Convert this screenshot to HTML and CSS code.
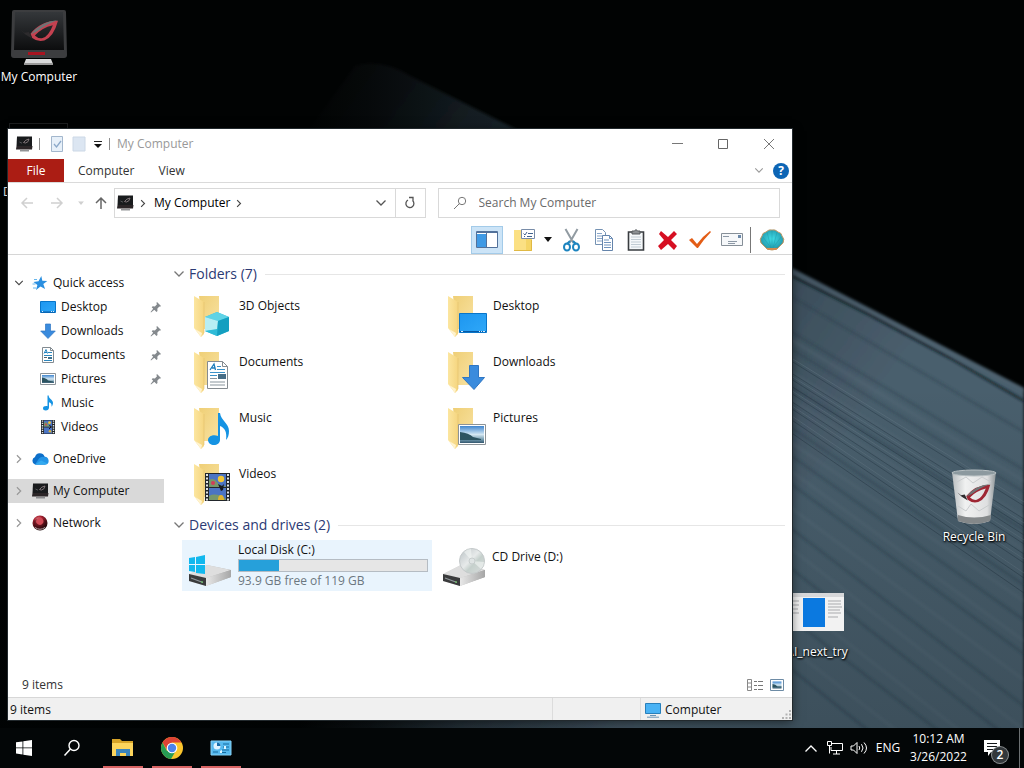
FILE: index.html
```html
<!DOCTYPE html>
<html lang="en">
<head>
<meta charset="utf-8">
<meta name="viewport" content="width=device-width, initial-scale=1">
<title>My Computer</title>
<link rel="stylesheet" href="styles.css">
</head>
<body>
<svg class="defs" aria-hidden="true">
  <defs>
    <linearGradient id="gFront" x1="0" y1="0" x2="1" y2="0"><stop offset="0" stop-color="#fce6a0"/><stop offset="1" stop-color="#f5d57f"/></linearGradient>
    <linearGradient id="gBack" x1="0" y1="0" x2="1" y2="1"><stop offset="0" stop-color="#efcf76"/><stop offset="1" stop-color="#f8e2a2"/></linearGradient>
    <linearGradient id="gBlue" x1="0" y1="0" x2="1" y2="1"><stop offset="0" stop-color="#1d96f0"/><stop offset="1" stop-color="#2fa8f8"/></linearGradient>
    <linearGradient id="gSky" x1="0" y1="0" x2="0" y2="1"><stop offset="0" stop-color="#3f86cf"/><stop offset=".5" stop-color="#d5e8f3"/><stop offset=".8" stop-color="#6f97ab"/><stop offset="1" stop-color="#32566e"/></linearGradient>
    <linearGradient id="gDrive" x1="0" y1="0" x2="1" y2="0"><stop offset="0" stop-color="#e8e8e8"/><stop offset="1" stop-color="#a6a6a6"/></linearGradient>
    <linearGradient id="gDisc" x1="0" y1="0" x2="1" y2="1"><stop offset="0" stop-color="#b9c1c4"/><stop offset=".45" stop-color="#e7eaea"/><stop offset=".6" stop-color="#c5d0cc"/><stop offset="1" stop-color="#d9dcdc"/></linearGradient>
    <radialGradient id="gBall" cx=".4" cy=".3" r=".7"><stop offset="0" stop-color="#e89a9a"/><stop offset=".4" stop-color="#a92030"/><stop offset="1" stop-color="#190608"/></radialGradient>
    <radialGradient id="gShell" cx=".5" cy=".45" r=".6"><stop offset="0" stop-color="#3fdce6"/><stop offset=".7" stop-color="#28a6b8"/><stop offset="1" stop-color="#6d7b62"/></radialGradient>
    <linearGradient id="gBin" x1="0" y1="0" x2="1" y2="0"><stop offset="0" stop-color="#b9bdbf"/><stop offset=".3" stop-color="#f0f1f1"/><stop offset=".8" stop-color="#dedfe0"/><stop offset="1" stop-color="#8e9598"/></linearGradient>
    <linearGradient id="gScreen" x1="0" y1="0" x2="0" y2="1"><stop offset="0" stop-color="#34373a"/><stop offset="1" stop-color="#0c0d0e"/></linearGradient>

    <symbol id="folder" viewBox="0 0 46 46">
      <path d="M8 1h20v33H12z" fill="url(#gBack)"/>
      <path d="M3 1l10 6v32l-3 3-7-9z" fill="url(#gFront)"/>
      <path d="M4 34l6 8 1-4z" fill="#fff3cf"/>
      <path d="M13 7v31" stroke="#e3c06c" stroke-width=".6"/>
    </symbol>
    <symbol id="pc" viewBox="0 0 18 16">
      <path d="M2 .5h15V10H1.500z" fill="#191b1d"/>
      <path d="M1.500 10h16l-.5 3.500H1z" fill="#2b2527"/>
      <path d="M8.500 6.500q2-3 5.500-3.500-.5 3.500-3.500 4z" fill="none" stroke="#97898d" stroke-width=".8"/>
      <path d="M4.500 6l2.500 1.200" stroke="#6d7072" stroke-width=".7"/>
      <path d="M5 14.800h9" stroke="#77797c" stroke-width="1.200"/>
    </symbol>
    <symbol id="star" viewBox="0 0 16 16"><path d="M9.300 1l1 4.800 5 .2-4 3 1.800 5-4.600-2.600L4 15l1.400-5L1.500 7l5-.8z" fill="#2a8fe0"/><path d="M2 4.500h3M.5 9h3M1 13h3" stroke="#55aeea" stroke-width=".9"/></symbol>
    <symbol id="desktop" viewBox="0 0 16 16"><path d="M.5 2.500h15v11H.5z" fill="url(#gBlue)" stroke="#0875c9"/><path d="M1 13h14" stroke="#0758a3"/><path d="M2 12.500h1m8 0h1m1 0h1" stroke="#d7efff"/></symbol>
    <symbol id="down" viewBox="0 0 16 16"><path d="M5.500 1h5v7h4.800L8 15.500.700 8h4.800z" fill="#3a8bdd" stroke="#2f76c3" stroke-width=".7"/></symbol>
    <symbol id="doc" viewBox="0 0 16 16"><path d="M2.500.5h8l3 3v12h-11z" fill="#fff" stroke="#828b91"/><path d="M10.500.5v3h3" fill="none" stroke="#828b91"/><path d="M4 6.500L6 2.500l1.500 4M5 5.500h2" fill="none" stroke="#2384c1"/><path d="M8 5.500h4M4 8.500h8M4 13.500h8" stroke="#2b86bd"/><path d="M4 10.500h3" stroke="#58636b"/><path d="M8 10h4v2H8z" fill="#3d718e"/></symbol>
    <symbol id="pic" viewBox="0 0 16 16"><path d="M.5 2.500h15v11H.5z" fill="#fff" stroke="#8d9499"/><path d="M2 4h12v8H2z" fill="url(#gSky)"/><path d="M2 6.500q5 1 6 3l5 1v.8H2z" fill="#2c5360"/></symbol>
    <symbol id="note" viewBox="0 0 16 16"><path d="M7.500.5h1.200c0 3.500 4.300 4.200 4.300 7.500 0 1.500-.8 3-1.500 3.800.5-3-1-4-2.500-4.500V12.500c0 2-1.500 3-3.200 3S3 14.500 3 13.200s1.600-2.400 4.500-2z" fill="#1593e3"/></symbol>
    <symbol id="film" viewBox="0 0 16 16"><path d="M1 1h14v14H1z" fill="#22262b"/><path d="M4 1.500h8v6H4zM4 8.500h8v6H4z" fill="#4b74c3"/><path d="M2.500 1.500v14M13.500 1.500v14" stroke="#e1e4e6" stroke-width="1.400" stroke-dasharray="1.300 1"/><path d="M4 4q2-2 4 1T12 7.500H4z" fill="#78976a"/><circle cx="9.500" cy="3.700" r="1.400" fill="#f1c634"/><path d="M8.500 13q0-2 1.500-2t1.500 2.500z" fill="#e0b42f"/><circle cx="6" cy="5.500" r=".9" fill="#d33d58"/><path d="M9.500 6l1.500 2-2 2" stroke="#15171d" fill="none"/></symbol>
    <symbol id="cloud" viewBox="0 0 18 16"><path d="M4 13.500a4 4 0 010-7.500 5 5 0 019.500-.5A4.200 4.200 0 0114 13.500z" fill="#0d6fc9"/><path d="M8 7.500a5 5 0 015-1.500 3.800 3.800 0 011.500 7.500H4z" fill="#2394e6"/><path d="M4 13.500l6-4 6.500 3q-1 1-2.500 1z" fill="#33aaf0"/></symbol>
    <symbol id="ball" viewBox="0 0 16 16"><circle cx="8" cy="8" r="7.500" fill="url(#gBall)"/><path d="M1.500 6q6-5 13 0L14 11q-6 5-12 0z" fill="#120608" opacity=".35"/><path d="M4 6q1-3 4-3.500 3 .5 3.500 3.500 0 3-3.500 4Q4 9 4 6z" fill="#d14a56"/><path d="M3 12.500q5 3.500 10 0" stroke="#b7a9aa" fill="none"/></symbol>
    <symbol id="pin" viewBox="0 0 12 12"><path d="M7 1l4 4-1 .8-.7-.2-2 2.200.2 2.200-1 1L1.700 6.200l1-1 2.200.2L7 3.200 6.400 2zM3.500 7.300l1.200 1.200L1 11.500 .600 11z" fill="#84898d"/></symbol>
    <symbol id="chevR" viewBox="0 0 8 12"><path d="M1.500 1.500L6 6l-4.500 4.500" fill="none" stroke="currentColor" stroke-width="1.500"/></symbol>
    <symbol id="chevD" viewBox="0 0 12 8"><path d="M1.500 1.500L6 6l4.500-4.500" fill="none" stroke="currentColor" stroke-width="1.300"/></symbol>
    <symbol id="arrow" viewBox="0 0 14 14"><path d="M13 7H2M7 2L2 7l5 5" fill="none" stroke="currentColor" stroke-width="1.500"/></symbol>
    <symbol id="tri" viewBox="0 0 8 5"><path d="M0 0h8L4 5z" fill="currentColor"/></symbol>
    <symbol id="drive" viewBox="0 0 46 26"><path d="M2 12L20 3l24 5v7L19 24 2 19z" fill="url(#gDrive)"/><path d="M2 12L20 3l24 5-25 8z" fill="#dedede"/><path d="M2 12l17 4v8L2 19z" fill="#3a3b3c"/><path d="M19 16l25-8v7L19 24z" fill="url(#gDrive)"/><path d="M4 16l12 4.500" stroke="#90979b" stroke-width="1.200"/><path d="M14 20h2" stroke="#6ad25f"/></symbol>
    <symbol id="eye" viewBox="0 0 46 28"><path d="M12 16Q24 1 44 1q-5 19-16 23-8 2-14-3l-2-5M17 18q8-9 21-12-5 13-12 15-5 1-9-3" fill="currentColor" fill-rule="evenodd"/><path d="M12 17Q23 2 44 0 30 5 20 13z" fill="#6f7375"/><path d="M0 11l5 4 5-1 4 8-8-5z" fill="#2d2b2d"/></symbol>
  </defs>
</svg>

<div class="screen">
  <svg class="wallpaper" viewBox="0 0 1024 768" preserveAspectRatio="xMidYMid slice" aria-hidden="true">
    <defs>
      <linearGradient id="slab" gradientUnits="userSpaceOnUse" x1="360" y1="60" x2="860" y2="420"><stop offset="0" stop-color="#12191d"/><stop offset=".2" stop-color="#1b262d"/><stop offset=".75" stop-color="#384a56"/><stop offset="1" stop-color="#4a5e6d"/></linearGradient>
      <linearGradient id="side" gradientUnits="userSpaceOnUse" x1="300" y1="0" x2="620" y2="0"><stop offset="0" stop-color="#010303"/><stop offset=".22" stop-color="#010303" stop-opacity=".75"/><stop offset=".5" stop-color="#010303" stop-opacity=".3"/><stop offset="1" stop-color="#010303" stop-opacity="0"/></linearGradient>
      <linearGradient id="low" x1="0" y1="0" x2="0" y2="1"><stop offset=".5" stop-color="#05090c" stop-opacity="0"/><stop offset="1" stop-color="#05090c" stop-opacity=".2"/></linearGradient>
      <filter id="soft"><feGaussianBlur stdDeviation="1.500"/></filter>
    </defs>
    <path d="M0 0h1024v768H0z" fill="#010303"/>
    <path d="M355 66Q380 58 410 76L792 268 1024 388V768H0V560z" fill="url(#slab)" filter="url(#soft)"/>
    <path d="M0 0h620v768H0z" fill="url(#side)"/>
    <g filter="url(#soft)" fill="none">
      <path d="M792 276L870 315 950 358 1024 401" stroke="#0a151d" stroke-width="2"/>
      <path d="M792 271L1024 391" stroke="#5a6a75" stroke-width="3" opacity=".4"/>
      <path d="M780 290l244 142M780 325l244 145M780 342l244 150M780 380l244 150M780 420l244 165M780 448l244 172M780 476l244 178M780 520l244 186M780 560l244 190M780 610l210 160M780 660l150 120" stroke="#263946" stroke-width="2" opacity=".5"/>
      <path d="M780 333l244 148M780 365l244 152M780 392l244 158M780 435l244 166M780 463l244 178M780 500l244 180M780 540l244 190M780 590l230 180M780 640l180 140" stroke="#607584" stroke-width="2" opacity=".35"/>
    </g>
    <path d="M780 354l244 152M780 366l244 153M780 372l244 155M780 379l244 156M780 386l244 158M780 394l244 160M780 401l244 162M780 412l244 166M780 425l244 168" fill="none" stroke="#1d2f3d" opacity=".4"/>
    <path d="M780 351l244 151M780 369l244 154M780 383l244 157M780 398l244 161M780 408l244 165" fill="none" stroke="#7b8e9a" opacity=".25"/>
    <path d="M0 0h1024v768H0z" fill="url(#low)"/>
  </svg>

  <main class="desktop">
    <a class="shortcut shortcut-pc" href="#pc">
      <svg width="58" height="58" viewBox="0 0 58 58" aria-hidden="true">
        <path d="M4 1h50q2 0 2 2l1 43q0 3-3 3H4q-3 0-3-3L2 3q0-2 2-2z" fill="#3c3d3f"/>
        <path d="M5 3h48l1 38H4z" fill="url(#gScreen)"/>
        <path d="M18 43h17v3H18z" fill="#a81420"/>
        <path d="M16 50h25l2 5H14z" fill="#d9dadb"/><path d="M14 54h29v2H14z" fill="#999"/>
        <svg x="9" y="11" width="42" height="24" viewBox="0 0 46 28" color="#c44150"><use href="#eye"/></svg>
      </svg>
      <span>My Computer</span>
    </a>
    <a class="shortcut shortcut-hidden" href="#d"><span class="thumb"></span><span>D</span></a>
    <a class="shortcut shortcut-bin" href="#bin">
      <svg width="48" height="58" viewBox="0 0 48 58" aria-hidden="true">
        <path d="M2 4h44l-6 49q-16 6-32 0z" fill="url(#gBin)"/>
        <path d="M8 47q16 5 33 0l-1 6q-16 6-32 0z" fill="#84888a"/>
        <path d="M7 14l9-5 7 6 9-6 9 5M8 38l8 5 5-7 8 7 10-6" fill="none" stroke="#c9ccce"/>
        <ellipse cx="24" cy="5" rx="22" ry="3" fill="#8c999f" stroke="#b8c0c3"/>
        <svg x="7" y="16" width="35" height="21" viewBox="0 0 46 28" color="#9e2633"><use href="#eye"/></svg>
      </svg>
      <span>Recycle Bin</span>
    </a>
    <a class="shortcut shortcut-shot" href="#shot">
      <svg width="54" height="38" viewBox="0 0 54 38" aria-hidden="true"><path d="M0 0h54v38H0z" fill="#f2f2f2"/><path d="M0 0h54v4H0z" fill="#d7d8da"/><path d="M13 5h22v29H13z" fill="#0b79e0"/><path d="M3 8h6M3 12h6M3 16h5M3 20h6M38 8h13M38 11h13M38 14h14M38 17h12M38 20h13M38 24h10" stroke="#a9aaad"/></svg>
      <span>AI_next_try</span>
    </a>

    <section class="window" aria-label="My Computer">
      <header class="titlebar">
        <svg width="18" height="16" aria-hidden="true"><use href="#pc"/></svg>
        <span class="sep"></span>
        <button class="quick" aria-label="Properties"><svg width="14" height="16" viewBox="0 0 14 16"><path d="M1.500.5h11v15h-11z" fill="#e7f0f9" stroke="#a3b7cd"/><path d="M4 8l2.500 3L11 5" fill="none" stroke="#8ba8c9" stroke-width="1.300"/></svg></button>
        <button class="quick" aria-label="New folder"><svg width="14" height="16" viewBox="0 0 14 16"><path d="M1 1h12v14H1z" fill="#dce6f2" stroke="#ccd8e6"/></svg></button>
        <button class="quick quick-menu" aria-label="Customize toolbar"><svg width="8" height="8" viewBox="0 0 8 8"><path d="M0 1.500h8" stroke="#222"/><path d="M0 4h8L4 8z" fill="#111"/></svg></button>
        <span class="sep sep-end"></span>
        <h1 class="title">My Computer</h1>
        <button class="wbtn" aria-label="Minimize"><svg width="12" height="12"><path d="M1 5.500h11" stroke="#777"/></svg></button>
        <button class="wbtn" aria-label="Maximize"><svg width="12" height="12"><path d="M1.500 1.500h9v9h-9z" fill="none" stroke="#666"/></svg></button>
        <button class="wbtn" aria-label="Close"><svg width="12" height="12"><path d="M1 1l10 10M11 1L1 11" stroke="#777"/></svg></button>
      </header>

      <nav class="tabs" aria-label="Ribbon">
        <button class="tab tab-file">File</button>
        <button class="tab">Computer</button>
        <button class="tab tab-view">View</button>
        <button class="expand" aria-label="Expand ribbon"><svg width="10" height="7" viewBox="0 0 12 8"><use href="#chevD"/></svg></button>
        <button class="help" aria-label="Help">?</button>
      </nav>

      <div class="address-row">
        <div class="arrows">
          <button class="off" aria-label="Back"><svg width="14" height="14"><use href="#arrow"/></svg></button>
          <button class="off" aria-label="Forward"><svg class="flip" width="14" height="14"><use href="#arrow"/></svg></button>
          <button class="off recent" aria-label="Recent locations"><svg width="6" height="4" viewBox="0 0 8 5"><use href="#tri"/></svg></button>
          <button class="up" aria-label="Up"><svg class="turn" width="14" height="14"><use href="#arrow"/></svg></button>
        </div>
        <div class="address">
          <svg width="18" height="16" aria-hidden="true"><use href="#pc"/></svg>
          <svg class="crumb" width="6" height="9" viewBox="0 0 8 12"><use href="#chevR"/></svg>
          <a href="#pc">My Computer</a>
          <svg class="crumb" width="6" height="9" viewBox="0 0 8 12"><use href="#chevR"/></svg>
          <button class="drop" aria-label="Previous locations"><svg width="12" height="8"><use href="#chevD"/></svg></button>
          <button class="refresh" aria-label="Refresh"><svg width="12" height="14" viewBox="0 0 12 14"><path d="M4 4a4 4 0 104.500.5M5 1.500h4v4" fill="none" stroke="#555" stroke-width="1.300"/></svg></button>
        </div>
        <label class="search">
          <svg width="14" height="14" viewBox="0 0 14 14" aria-hidden="true"><circle cx="9" cy="5" r="3.700" fill="none" stroke="#777"/><path d="M6.500 7.500L1 13" stroke="#777"/></svg>
          <input type="search" placeholder="Search My Computer" aria-label="Search My Computer">
        </label>
      </div>

      <div class="toolbar" role="toolbar" aria-label="Commands">
        <button class="tool tool-on" aria-label="Navigation pane"><svg width="24" height="20" viewBox="0 0 24 20"><path d="M1.500 1.500h21v16h-21z" fill="#fff" stroke="#52719a"/><path d="M2 4h9v13H2z" fill="#3f9ae5"/><path d="M2 2.500h20M11.500 2v15" stroke="#52719a"/></svg></button>
        <button class="tool tool-props" aria-label="Folder options"><svg width="24" height="24" viewBox="0 0 24 24"><path d="M2 2h12v21H2z" fill="#fbe083"/><path d="M14 10h6v13h-6z" fill="#f5d566"/><path d="M2 22.500h17.500V12" fill="none" stroke="#e0b944"/><path d="M9.500 1.500h13v9h-13z" fill="#fff" stroke="#788ca8"/><path d="M11.500 5.500l1.500 1.500 2-3M16 5.500h5M12 8.500h1m2 0h5" fill="none" stroke="#42638e"/></svg><svg class="more" width="8" height="5"><use href="#tri"/></svg></button>
        <button class="tool" aria-label="Cut"><svg width="22" height="24" viewBox="0 0 22 24"><path d="M4.500 1l8 14M16.500 1l-8 14" stroke="#919ba2" stroke-width="2"/><path d="M9 13l-3 3M12 13l3 3" stroke="#1d84bf" stroke-width="2"/><ellipse cx="6" cy="19" rx="3" ry="3.500" fill="none" stroke="#1d84bf" stroke-width="2"/><ellipse cx="15" cy="19" rx="3" ry="3.500" fill="none" stroke="#1d84bf" stroke-width="2"/></svg></button>
        <button class="tool" aria-label="Copy"><svg width="22" height="24" viewBox="0 0 22 24"><path d="M2.500 1.500h7l3 3v12h-10z" fill="#fff" stroke="#7592b3"/><path d="M4 5.500h5M4 8h7M4 10.500h5M4 13h5" stroke="#89a6c9"/><path d="M9.500 7.500h7l3 3v12h-10z" fill="#fff" stroke="#6484ab"/><path d="M16.500 7.500v3h3M11 12h5M11 14.500h7M11 17h7M11 19.500h7" fill="none" stroke="#6f93bd"/></svg></button>
        <button class="tool" aria-label="Paste"><svg width="20" height="24" viewBox="0 0 20 24"><path d="M2.500 4h15v18h-15z" fill="#f5f8fa" stroke="#393c40" stroke-width="1.600"/><path d="M6 6V3h2.500q1.500-3 3 0H14v3z" fill="#8c9093" stroke="#55595d"/><path d="M5 9h10M5 11.500h10M5 14h10M5 16.500h10M5 19h10" stroke="#c1ccd4"/></svg></button>
        <button class="tool" aria-label="Delete"><svg width="22" height="22" viewBox="0 0 22 22"><path d="M4 2l7 6 6-6 3 3-6 6 6 6-3 4-6-6-7 6-3-4 6-6-5-6z" fill="#d60f22"/></svg></button>
        <button class="tool" aria-label="Apply"><svg width="24" height="20" viewBox="0 0 24 20"><path d="M1 10l3-2 5 6Q15 6 22 1l1 1q-7 7-13 16H9z" fill="#e35d16"/></svg></button>
        <button class="tool" aria-label="E-mail"><svg width="24" height="16" viewBox="0 0 24 16"><path d="M1.500 1.500h21v12h-21z" fill="#f6f8fa" stroke="#868f98"/><path d="M3 4.500h6M8 9.500h9M8 11.500h7" stroke="#8c98a5"/><path d="M18 3h3v3h-3z" fill="#6b88a8"/></svg></button>
        <span class="tool-sep"></span>
        <button class="tool tool-shell" aria-label="Classic Shell"><svg width="26" height="24" viewBox="0 0 26 24"><path d="M8 21L2 15q-2-4 1-7 0-3 4-4 3-3 6-2 3-1 6 2 4 1 4 4 3 3 1 7l-6 6q-5 2-10 0z" fill="url(#gShell)" stroke="#bf9968"/><path d="M12 20L4 9M12 20L8 4M13 20V2M14 20l4-16M14 20l8-11" stroke="#1a96a3" opacity=".4"/><path d="M7 20h12l-2 2H9z" fill="#d18b51"/></svg></button>
      </div>

      <div class="body">
        <nav class="side" aria-label="Navigation pane">
          <a class="node" href="#quick"><svg class="tw open" width="10" height="8" viewBox="0 0 12 8"><use href="#chevD"/></svg><svg width="16" height="16" viewBox="0 0 16 16"><use href="#star"/></svg><span>Quick access</span></a>
          <a class="leaf" href="#desktop"><svg width="16" height="16"><use href="#desktop"/></svg><span>Desktop</span><svg class="pin" width="12" height="12"><use href="#pin"/></svg></a>
          <a class="leaf" href="#downloads"><svg width="16" height="16"><use href="#down"/></svg><span>Downloads</span><svg class="pin" width="12" height="12"><use href="#pin"/></svg></a>
          <a class="leaf" href="#documents"><svg width="16" height="16"><use href="#doc"/></svg><span>Documents</span><svg class="pin" width="12" height="12"><use href="#pin"/></svg></a>
          <a class="leaf" href="#pictures"><svg width="16" height="16"><use href="#pic"/></svg><span>Pictures</span><svg class="pin" width="12" height="12"><use href="#pin"/></svg></a>
          <a class="leaf" href="#music"><svg width="16" height="16"><use href="#note"/></svg><span>Music</span></a>
          <a class="leaf" href="#videos"><svg width="16" height="16"><use href="#film"/></svg><span>Videos</span></a>
          <a class="node spaced" href="#onedrive"><svg class="tw" width="10" height="10" viewBox="0 0 8 12"><use href="#chevR"/></svg><svg width="18" height="16"><use href="#cloud"/></svg><span>OneDrive</span></a>
          <a class="node spaced current" href="#pc" aria-current="page"><svg class="tw" width="10" height="10" viewBox="0 0 8 12"><use href="#chevR"/></svg><svg width="18" height="16"><use href="#pc"/></svg><span>My Computer</span></a>
          <a class="node spaced" href="#network"><svg class="tw" width="10" height="10" viewBox="0 0 8 12"><use href="#chevR"/></svg><svg width="16" height="16" viewBox="0 0 16 16"><use href="#ball"/></svg><span>Network</span></a>
        </nav>

        <div class="content">
          <section>
            <h2 class="group"><svg width="12" height="8"><use href="#chevD"/></svg><span>Folders (7)</span></h2>
            <div class="tiles">
              <a class="tile" href="#3d"><svg width="46" height="46" viewBox="0 0 46 46"><use href="#folder" width="46" height="46"/><path d="M14 22l12-5 12 5v14l-12 5-12-5z" fill="#35bfd9"/><path d="M14 22l12-5 12 5-11 4z" fill="#5fd3e6"/><path d="M14 22l13 4-1 9-12 1z" fill="#b7eef4"/><path d="M14 36l12-2v7z" fill="#2fbbd7"/><path d="M27 26l11-4v14l-12 5z" fill="#149fc0"/></svg><span>3D Objects</span></a>
              <a class="tile" href="#desktop"><svg width="46" height="46" viewBox="0 0 46 46"><use href="#folder" width="46" height="46"/><path d="M14.500 18.500h27v19h-27z" fill="url(#gBlue)" stroke="#0875c9"/><path d="M15 36.500h26" stroke="#0758a3"/><path d="M16 36.500h2m16 0h1m1 0h1m1 0h2" stroke="#d7efff"/></svg><span>Desktop</span></a>
              <a class="tile" href="#documents"><svg width="46" height="46" viewBox="0 0 46 46"><use href="#folder" width="46" height="46"/><path d="M16.500 10.500h15l5 5v22h-20z" fill="#fff" stroke="#858b90"/><path d="M31.500 10.500v5h5" fill="none" stroke="#858b90"/><path d="M19 19l4-6 1.500 6M21 17h3" fill="none" stroke="#1d7dbc" stroke-width="1.300"/><path d="M26 15.500h4M26 18.500h8M19 21.500h15M19 24.500h7" stroke="#3b92c9"/><path d="M19 27.500h7M19 31h15M19 34h15" stroke="#89959d"/><path d="M27 23h8v5h-8z" fill="#466d86"/></svg><span>Documents</span></a>
              <a class="tile" href="#downloads"><svg width="46" height="46" viewBox="0 0 46 46"><use href="#folder" width="46" height="46"/><path d="M24.500 14.500h9v12h6L29 38.500 17.500 26.500h7z" fill="#3a8bdd" stroke="#2f76c3"/></svg><span>Downloads</span></a>
              <a class="tile" href="#music"><svg width="46" height="46" viewBox="0 0 46 46"><use href="#folder" width="46" height="46"/><path d="M27 6h2c1 8 9 10 9 18 0 4-1 7-3 9 1-8-1-12-6-14v14c0 3-3 5-6 5s-6-2-6-5 4-6 10-4z" fill="#1593e3"/></svg><span>Music</span></a>
              <a class="tile" href="#pictures"><svg width="46" height="46" viewBox="0 0 46 46"><use href="#folder" width="46" height="46"/><path d="M13.500 17.500h27v20h-27z" fill="#fff" stroke="#8c9397"/><path d="M15 19h24v17H15z" fill="url(#gSky)"/><path d="M15 25q9 1 13 5l8 2v1H15z" fill="#2c5360"/></svg><span>Pictures</span></a>
              <a class="tile" href="#videos"><svg width="46" height="46" viewBox="0 0 46 46"><use href="#folder" width="46" height="46"/><path d="M14 10h25v28H14z" fill="#22262b"/><path d="M18 11h17v13H18zM18 25h17v12H18z" fill="#4b74c3"/><path d="M16 11v27M37 11v27" stroke="#e1e4e6" stroke-width="2" stroke-dasharray="2 1.500"/><path d="M18 17q5-3 8 2t9 4v1H18zM18 33q7-4 17 3v1H18z" fill="#78976a"/><circle cx="30" cy="16" r="3.200" fill="#f1c634"/><circle cx="22" cy="20" r="2" fill="#d33d58"/><path d="M27 37q0-5 3-5t3 5z" fill="#e0b42f"/><path d="M27 21l4 2 2-2-1 6-2 1z" fill="#17191f"/></svg><span>Videos</span></a>
            </div>
          </section>
          <section>
            <h2 class="group"><svg width="12" height="8"><use href="#chevD"/></svg><span>Devices and drives (2)</span></h2>
            <div class="tiles drives">
              <a class="tile drive selected" href="#c"><svg width="46" height="46" viewBox="0 0 46 46"><use href="#drive" y="19" width="46" height="26"/><path d="M2 15l6-1v7H2zM9 14l9-2v9H9zM2 22h6v7l-6-1zM9 22h9v9l-9-1z" fill="#12b8ee"/></svg>
                <span class="usage"><label for="disk">Local Disk (C:)</label><progress id="disk" max="119" value="25.100"></progress><small>93.9 GB free of 119 GB</small></span></a>
              <a class="tile drive" href="#d-drive"><svg width="46" height="46" viewBox="0 0 46 46"><use href="#drive" y="19" width="46" height="26"/><circle cx="31" cy="18" r="12.500" fill="url(#gDisc)" stroke="#c4c9ca"/><path d="M31 18l-8-9q3-3 7-3zM31 18l9 8q3-3 3-7z" fill="#f4f7f5" opacity=".6"/><circle cx="31" cy="18" r="3" fill="#dfe4e4" stroke="#c7cdcd"/></svg><span>CD Drive (D:)</span></a>
            </div>
          </section>
        </div>
      </div>

      <div class="details">
        <span>9 items</span>
        <button aria-label="Details view"><svg width="16" height="12" viewBox="0 0 16 12"><path d="M.5.5h4v11h-4zM.5 4h4M.5 8h4" fill="#fff" stroke="#888"/><path d="M7 2.500h3m1 0h5M7 6.500h3m1 0h5M7 10.500h3m1 0h5" stroke="#777"/></svg></button>
        <button aria-label="Large icons view"><svg width="14" height="12" viewBox="0 0 14 12"><path d="M.5.5h13v11H.5z" fill="#fff" stroke="#6d8ba5"/><path d="M2.500 2.500h9v7h-9z" fill="url(#gSky)"/><path d="M2.500 5q3 0 5 2.500h4v1h-9z" fill="#2c5360"/></svg></button>
      </div>

      <footer class="status">
        <span class="cell cell-items">9 items</span>
        <span class="cell cell-empty"></span>
        <span class="cell cell-zone"><svg width="18" height="16" viewBox="0 0 18 16" aria-hidden="true"><path d="M1.500 1.500h15v10h-15z" fill="#49b2f4" stroke="#287fba"/><path d="M6 13.500h6M3 15.200h12" stroke="#6a94b5"/></svg>Computer</span>
        <svg class="grip" width="9" height="9" viewBox="0 0 9 9" aria-hidden="true"><path d="M7 0h2v2H7zM7 3.500h2v2H7zM7 7h2v2H7zM3.500 3.500h2v2h-2zM3.500 7h2v2h-2zM0 7h2v2H0z" fill="#b3b3b3"/></svg>
      </footer>
    </section>
  </main>

  <footer class="taskbar">
    <button class="task" aria-label="Start"><svg width="16" height="16" viewBox="0 0 16 16"><path d="M0 2.300l6.500-.9v6.100H0zM7.300 1.300L16 0v7.500H7.300zM0 8.300h6.500v6.200L0 13.600zM7.300 8.300H16V16l-8.700-1.300z" fill="#fff"/></svg></button>
    <button class="task task-search" aria-label="Search"><svg width="18" height="18" viewBox="0 0 18 18"><circle cx="11" cy="6.500" r="5" fill="none" stroke="#fff" stroke-width="1.400"/><path d="M7.500 10L1.500 16.500" stroke="#fff" stroke-width="1.500"/></svg></button>
    <button class="task running" aria-label="File Explorer"><svg width="22" height="20" viewBox="0 0 22 20"><path d="M0 1h8l2 2h11v7H0z" fill="#d6a328"/><path d="M0 5h21v13H0z" fill="#fcd45c"/><path d="M4 18v-7h14v7h-4v-3H8v3z" fill="#3b84bc"/></svg></button>
    <button class="task running" aria-label="Chrome"><svg width="22" height="22" viewBox="0 0 22 22"><circle cx="11" cy="11" r="11" fill="#fbc52d"/><path d="M1.500 5.500A11 11 0 0120.500 5.500H11L6.500 13.500z" fill="#dd4335"/><path d="M1.500 5.500A11 11 0 0010 22l5-8.500-9 .5z" fill="#279c54"/><circle cx="11" cy="11" r="5.300" fill="#fff"/><circle cx="11" cy="11" r="4.200" fill="#4c83ec"/></svg></button>
    <button class="task running" aria-label="Control Panel"><svg width="22" height="18" viewBox="0 0 22 18"><path d="M1 2h20v14H1z" fill="#56b9ee" stroke="#86d2f7"/><circle cx="7" cy="7" r="3.500" fill="#dff4ff"/><path d="M7 7V3.500A3.500 3.500 0 0110.500 7z" fill="#176ca8"/><path d="M3 13h5M13 5h6M13 8h6M12 11h7M12 13.500h4" stroke="#166b9f"/><path d="M10 12l2-1v3h-2zM14 7l2 0v3h-2z" fill="#e1f6ff"/></svg></button>
    <div class="tray">
      <button aria-label="Show hidden icons"><svg width="14" height="9" viewBox="0 0 14 9"><path d="M1.500 7.500L7 2l5.500 5.500" fill="none" stroke="#fff" stroke-width="1.300"/></svg></button>
      <button aria-label="Network"><svg width="16" height="14" viewBox="0 0 16 14"><path d="M5 2.500h10.500v7H4V6M9.500 10v3M6 13h7M.5.500h4v4h-4zM2.500 4.500v8" fill="none" stroke="#fff"/></svg></button>
      <button aria-label="Volume"><svg width="18" height="14" viewBox="0 0 18 14"><path d="M1 5h2.500L7 1.500v11L3.500 9H1zM9 5q1.500 2 0 4M11.500 3.200q3 3.800 0 7.600M14 1.500q5 5.500 0 11" fill="none" stroke="#fff"/></svg></button>
      <button class="lang">ENG</button>
      <button class="clock"><time datetime="2022-03-26T10:12">10:12 AM<br>3/26/2022</time></button>
      <button class="notes" aria-label="2 notifications"><svg width="18" height="18" viewBox="0 0 18 18"><path d="M1 1h16v12H8l-3 4v-4H1z" fill="#fff"/><path d="M4 4.500h10M4 7.500h10M4 10.500h6" stroke="#15191b"/></svg><span class="count">2</span></button>
      <button class="peek" aria-label="Show desktop"></button>
    </div>
  </footer>
</div>
</body>
</html>
```

FILE: styles.css
```css
* { box-sizing: border-box; }

body {
  margin: 0;
  background: #010303;
  color: #111;
  font: 12px/16px "Open Sans", "Noto Sans", sans-serif;
}

button, input { font: inherit; color: inherit; margin: 0; padding: 0; border: 0; background: none; }
button { display: flex; align-items: center; justify-content: center; }
a { color: inherit; text-decoration: none; }
svg { display: block; flex: none; }
h1, h2 { margin: 0; font-weight: 400; }

.defs { position: absolute; width: 0; height: 0; }

.screen {
  position: relative;
  display: flex;
  flex-direction: column;
  min-height: 100vh;
  overflow: hidden;
}
.wallpaper { position: absolute; inset: 0; width: 100%; height: 100%; }
.desktop { position: relative; flex: 1; min-height: 640px; }

/* Desktop shortcuts */
.shortcut {
  position: absolute;
  display: flex;
  flex-direction: column;
  align-items: center;
  width: 80px;
  color: #fff;
  text-shadow: 0 1px 2px #000, 1px 1px 2px #000;
}
.shortcut-pc { left: -1px; top: 9px; gap: 2px; }
.shortcut-hidden { left: 3px; top: 123px; align-items: flex-start; gap: 1px; }
.shortcut-hidden .thumb { width: 59px; height: 60px; margin-left: 6px; border: 1px solid #1d1f20; }
.shortcut-bin { right: 10px; top: 468px; gap: 3px; }
.shortcut-shot { left: 777px; top: 593px; gap: 13px; }

/* Explorer window */
.window {
  position: absolute;
  inset: 129px 232px 8px 8px;
  display: flex;
  flex-direction: column;
  background: #fff;
  box-shadow: 0 0 0 1px #22292d, 0 2px 10px #0008;
}

.titlebar { display: flex; align-items: center; height: 30px; padding-left: 7px; }
.sep { width: 1px; height: 12px; margin: 0 10px 0 6px; background: #8c8c8c; }
.sep-end { margin: 0 7px; }
.quick { width: 14px; margin-right: 8px; }
.quick-menu { width: 8px; margin-right: 0; }
.title { flex: 1; color: #999; font-size: 12px; }
.wbtn { width: 46px; height: 30px; }

.tabs { display: flex; align-items: center; height: 24px; border-bottom: 1px solid #dadada; color: #333; }
.tab { height: 23px; padding: 0 14px; }
.tab-file { width: 56px; background: #ab1d14; color: #fff; }
.tab-view { padding: 0 10px; }
.expand { margin-left: auto; width: 24px; color: #999; }
.help { width: 16px; height: 16px; margin: 0 3px 0 2px; border-radius: 50%; background: #0c65b5; color: #fff; font-weight: 700; }

.address-row { display: flex; align-items: center; height: 40px; padding-right: 12px; }
.arrows { display: flex; align-items: center; width: 106px; padding-left: 12px; color: #666; }
.arrows .off { color: #d0d0d0; }
.arrows button { width: 14px; margin-right: 16px; }
.arrows .recent { width: 6px; margin: 0 10px 0 -2px; }
.arrows .up { margin: 0; }
.flip { transform: rotate(180deg); }
.turn { transform: rotate(90deg); }
.address { display: flex; flex: 308; align-items: center; height: 30px; padding-left: 1px; border: 1px solid #d9d9d9; }
.address .crumb { margin: 0 8px 0 6px; color: #444; }
.address a { color: #000; }
.drop { width: 28px; height: 28px; margin-left: auto; color: #555; }
.refresh { width: 30px; height: 28px; border-left: 1px solid #d9d9d9; }
.search { display: flex; flex: 312; align-items: center; gap: 12px; height: 30px; margin-left: 12px; padding: 0 14px; border: 1px solid #d9d9d9; }
.search input { flex: 1; min-width: 0; outline: 0; }
.search input::placeholder { color: #6a6a6a; opacity: 1; }

.toolbar { display: flex; align-items: center; justify-content: flex-end; height: 32px; padding: 2px 4px 0 0; border-bottom: 1px solid #d6d6d6; }
.tool { width: 32px; height: 28px; }
.tool-on { background: #cce4f7; border: 1px solid #a3cbe9; }
.tool-props { width: 53px; gap: 8px; padding-left: 4px; color: #111; }
.tool-sep { width: 1px; height: 26px; margin: 0 5px 0 2px; background: #777; }

.body { display: flex; flex: 1; min-height: 0; }
.side { width: 156px; padding-top: 16px; }
.node, .leaf { display: flex; align-items: center; height: 24px; }
.node { gap: 4px; padding-left: 6px; }
.node svg:nth-child(2) { width: 18px; }
.node .tw { margin-right: 3px; color: #999; }
.node .open { color: #444; }
.leaf { gap: 5px; padding: 0 2px 0 32px; }
.spaced { margin-top: 8px; }
.current { background: #d9d9d9; }
.pin { margin-left: auto; }

.content { flex: 1; min-width: 0; padding: 9px 7px 0 9px; }
.group { display: flex; align-items: center; gap: 4px; height: 20px; color: #2c3a74; font-size: 14px; line-height: 20px; }
.group svg { color: #777; }
.group::after { content: ""; flex: 1; height: 1px; margin-left: 4px; background: #e6e6e6; }
.tiles { display: grid; grid-template-columns: repeat(auto-fill, 250px); column-gap: 4px; padding: 9px 0 0 9px; }
.tile { display: flex; gap: 2px; height: 56px; padding-left: 9px; }
.tile > span { padding-top: 5px; }
.tile > svg { margin-top: 2px; }
.content section + section { margin-top: -2px; }
.drives { padding-top: 5px; }
.drive { height: 51px; gap: 5px; padding: 1px 4px 0 5px; }
.drive:not(.selected) > span { padding-top: 8px; }
.selected { background: #e9f4fd; }
.tile .usage { display: flex; flex: 1; flex-direction: column; padding-top: 1px; }
.usage progress { width: 100%; height: 13px; margin: 1px 0; appearance: none; border: 1px solid #b5bcc3; background: #e6e6e6; }
.usage progress::-webkit-progress-bar { background: #e6e6e6; }
.usage progress::-webkit-progress-value { background: #26a0da; }
.usage small { color: #6c7780; font-size: 12px; }

.details { display: flex; align-items: center; gap: 7px; height: 25px; padding: 1px 8px 0 14px; color: #333; }
.details span { flex: 1; }
.status { display: flex; align-items: center; height: 23px; border-top: 1px solid #d7d7d7; background: #f0f0f0; }
.cell { display: flex; align-items: center; height: 22px; padding-top: 1px; }
.cell-items { flex: 1; padding-left: 2px; }
.cell-empty { width: 88px; border-left: 1px solid #dcdcdc; }
.cell-zone { gap: 3px; width: 142px; padding-left: 3px; border-left: 1px solid #dcdcdc; }
.grip { align-self: flex-end; margin: 0 1px 1px 0; }

/* Taskbar */
.taskbar { position: relative; display: flex; gap: 1px; height: 40px; background: #030607; color: #fff; }
.task { width: 48px; height: 40px; }
.task-search { margin: 0 2px 0 -1px; }
.running { box-shadow: inset 0 -2px #d96464; width: 40px; margin: 0 4px; }
.tray { display: flex; align-items: center; margin-left: auto; }
.tray button { height: 40px; width: 24px; }
.tray .lang { width: 34px; }
.tray .clock { width: 67px; line-height: 18px; }
.tray .notes { position: relative; width: 47px; padding-right: 8px; }
.notes .count {
  position: absolute;
  left: 20px;
  top: 19px;
  width: 16px;
  height: 16px;
  border-radius: 50%;
  background: #33383b;
  box-shadow: 0 0 0 1px #8b9092;
  font-weight: 600;
}
.tray .peek { width: 5px; border-left: 1px solid #6c7072; }
```
